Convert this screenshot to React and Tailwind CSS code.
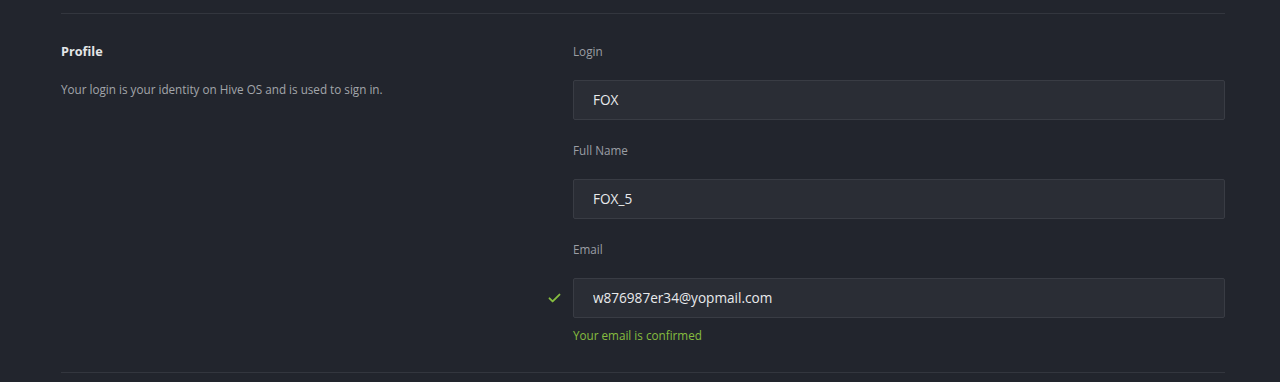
const fields = [
    { label: "Login", value: "FOX" },
    { label: "Full Name", value: "FOX_5" },
];

function Field({ label, value, confirmed, children }) {
    return (
        <div>
            <div className="text-[11.7px] leading-[19px] text-[#9b9ea4] mb-[19px]">{label}</div>
            <div className="relative">
                {confirmed && (
                    <svg
                        className="absolute left-[-26px] top-1/2 -translate-y-1/2"
                        width="15"
                        height="15"
                        viewBox="0 0 24 24"
                        fill="none"
                        stroke="#86bd3f"
                        strokeWidth="3"
                        strokeLinecap="round"
                        strokeLinejoin="round"
                    >
                        <path d="M4 12.5l5 5L20 6.5" />
                    </svg>
                )}
                <input
                    readOnly
                    value={value}
                    className="w-full h-10 px-[19px] pb-px bg-[#2a2d35] border border-[#393c44] rounded-[2px] text-[13.6px] text-[#e9eaec] outline-none"
                />
            </div>
            {children}
        </div>
    );
}

export default function App() {
    return (
        <div
            className="min-h-screen bg-[#22252d] pt-[13px]"
            style={{ fontFamily: '"Open Sans", "Noto Sans", sans-serif' }}
        >
            <div className="mx-[61px] w-[1164px] border-t border-b border-[#33363e] pt-7 pb-7 flex">
                {/* Left: section description */}
                <div className="w-[512px] shrink-0">
                    <h2 className="text-[12.7px] leading-[19px] font-bold text-[#e4e5e7]">Profile</h2>
                    <p className="mt-[19px] text-[11.7px] leading-[19px] text-[#a3a6ab]">
                        Your login is your identity on Hive OS and is used to sign in.
                    </p>
                </div>

                {/* Right: fields */}
                <div className="flex-1 flex flex-col gap-[21px]">
                    {fields.map((f) => (
                        <Field key={f.label} label={f.label} value={f.value} />
                    ))}
                    <Field label="Email" value="w876987er34@yopmail.com" confirmed>
                        <div className="mt-2 text-[11.7px] leading-[18px] text-[#86bd3f]">
                            Your email is confirmed
                        </div>
                    </Field>
                </div>
            </div>
        </div>
    );
}
